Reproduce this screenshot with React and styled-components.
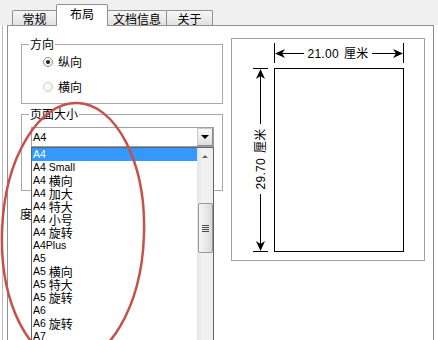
import React from "react";
import styled, { createGlobalStyle } from "styled-components";

const CJK = `"Noto Sans CJK SC", sans-serif`;
const UI = `"Liberation Sans", "Noto Sans CJK SC", sans-serif`;

const GlobalStyle = createGlobalStyle`
  html, body { margin: 0; padding: 0; background: #fff; }
  body { width: 438px; height: 340px; overflow: hidden; font: 12px ${UI}; color: #000; }
  * { box-sizing: border-box; }
`;

const Dialog = styled.div`
  position: relative;
  width: 438px;
  height: 340px;
  overflow: hidden;
  display: flex;
  flex-direction: column;
  background: linear-gradient(to right, transparent 2px, #bcbcbc 2px, #bcbcbc 3px, transparent 3px) #fff;
`;

const TabStrip = styled.div`
  position: relative;
  z-index: 1;
  height: 25px;
  flex: none;
  display: flex;
  align-items: flex-end;
  padding-left: 12px;
  background: #f0f0f0;
`;

const Tab = styled.div`
  position: relative;
  z-index: ${(p) => (p.$active ? 2 : 1)};
  width: ${(p) => p.$w}px;
  height: ${(p) => (p.$active ? 22 : 15)}px;
  margin-left: ${(p) => (p.$first ? 0 : -1)}px;
  margin-bottom: ${(p) => (p.$active ? -1 : 0)}px;
  padding-top: ${(p) => (p.$active ? 2 : 1)}px;
  display: flex;
  justify-content: center;
  align-items: flex-start;
  border: 1px solid #8e9094;
  border-bottom: none;
  border-radius: 2px 2px 0 0;
  background: ${(p) => (p.$active ? "#fff" : "linear-gradient(#f7f7f7, #e1e1e1)")};
  font: 12px/14px ${CJK};
  white-space: nowrap;
`;

const Panel = styled.div`
  flex: 1;
  margin: 0 4px 0 7px;
  border: 1px solid #8e9094;
  border-bottom: none;
  background: #fff;
  display: grid;
  grid-template-columns: 202px 194px;
  column-gap: 8px;
  align-items: start;
  padding: 11px 0 0 13px;
`;

const LeftCol = styled.div`
  display: flex;
  flex-direction: column;
`;

const GroupBox = styled.fieldset`
  margin: ${(p) => p.$mt || 0}px 0 0 0;
  padding: 0 8px ${(p) => p.$pb}px 7px;
  min-width: 0;
  border: 1px solid #a9a9a9;
  box-shadow: inset 1px 1px 0 #fff;
`;

const Legend = styled.legend`
  padding: 0 1px;
  font: 12px/14px ${CJK};
`;

const Options = styled.div`
  display: flex;
  flex-direction: column;
  gap: 11px;
  padding: 4px 0 9px 14px;
`;

const Option = styled.label`
  display: flex;
  align-items: center;
  gap: 5px;
  height: 14px;
  font: 12px/14px ${CJK};
`;

const RadioMark = styled.span`
  width: 10px;
  height: 10px;
  flex: none;
  border-radius: 50%;
  border: 1px solid ${(p) => (p.$checked ? "#8f8f8f" : "#cdcdcd")};
  background: radial-gradient(circle at 35% 35%, #fff, #ececec);
  display: flex;
  align-items: center;
  justify-content: center;
  &::after {
    content: "";
    width: 4px;
    height: 4px;
    border-radius: 50%;
    background: ${(p) => (p.$checked ? "#1c1c1c" : "transparent")};
  }
`;

const ComboBox = styled.div`
  position: relative;
  margin: 6px 0 0 2px;
  width: 183px;
  height: 20px;
  display: flex;
  border: 1px solid #9da0a6;
  background: #fff;
`;

const ComboValue = styled.div`
  flex: 1;
  padding-left: 1px;
  font: 11px/18px ${UI};
`;

const ComboButton = styled.div`
  width: 16px;
  height: 18px;
  display: flex;
  align-items: center;
  justify-content: center;
  border: 1px solid #9a9a9a;
  border-color: #c9c9c9 #8a8a8a #8a8a8a #c9c9c9;
  background: linear-gradient(#fafafa, #dedede);
`;

const DownTriangle = styled.span`
  width: 0;
  height: 0;
  border-left: 4px solid transparent;
  border-right: 4px solid transparent;
  border-top: 4px solid #000;
`;

const DropList = styled.div`
  position: absolute;
  z-index: 5;
  top: 19px;
  left: -1px;
  width: 183px;
  height: 200px;
  display: flex;
  border: 1px solid #646464;
  background: #fff;
`;

const Items = styled.div`
  flex: 1;
  display: flex;
  flex-direction: column;
`;

const Item = styled.div`
  height: 13px;
  display: flex;
  align-items: center;
  padding-left: 1px;
  white-space: pre;
  background: ${(p) => (p.$selected ? "#3399ff" : "transparent")};
  color: ${(p) => (p.$selected ? "#fff" : "#000")};
`;

const Latin = styled.span`
  font: 10.5px/13px "Liberation Sans", sans-serif;
`;

const Cjk = styled.span`
  font: 12px/13px ${CJK};
`;

const ScrollBar = styled.div`
  width: 16px;
  display: flex;
  flex-direction: column;
  background: linear-gradient(to right, #e4e4e4, #f3f3f3 40%, #eeeeee);
`;

const ScrollUp = styled.div`
  height: 17px;
  display: flex;
  align-items: center;
  justify-content: center;
`;

const UpTriangle = styled.span`
  width: 0;
  height: 0;
  border-left: 3px solid transparent;
  border-right: 3px solid transparent;
  border-bottom: 3px solid #606060;
`;

const Thumb = styled.div`
  margin: 38px 0 0 1px;
  width: 15px;
  height: 50px;
  display: flex;
  align-items: center;
  justify-content: center;
  border: 1px solid #979797;
  border-radius: 2px;
  background: linear-gradient(to right, #f6f6f6, #e6e6e6 60%, #d8d8d8);
`;

const Grip = styled.span`
  width: 7px;
  height: 7px;
  background: repeating-linear-gradient(to bottom, #4a4a4a 0 1px, transparent 1px 2px);
`;

const FieldLabel = styled.div`
  margin: 16px 0 0 -1px;
  font: 12px/14px ${CJK};
`;

const Preview = styled.div`
  margin-top: 1px;
  height: 223px;
  border: 1px solid #a0a0a0;
  box-shadow: 1px 1px 0 #fff;
  background: #fff;
`;

const PreviewSvg = styled.svg`
  display: block;
  font-family: ${UI};
`;

const Annotation = styled.svg`
  position: absolute;
  inset: 0;
  z-index: 10;
  pointer-events: none;
`;

const TABS = [
  { label: "常规", w: 45 },
  { label: "布局", w: 52, active: true },
  { label: "文档信息", w: 60 },
  { label: "关于", w: 47 },
];

const SIZES = [
  ["A4"],
  ["A4 Small"],
  ["A4", "横向"],
  ["A4", "加大"],
  ["A4", "特大"],
  ["A4", "小号"],
  ["A4", "旋转"],
  ["A4Plus"],
  ["A5"],
  ["A5", "横向"],
  ["A5", "特大"],
  ["A5", "旋转"],
  ["A6"],
  ["A6", "旋转"],
  ["A7"],
];

export default function App() {
  return (
    <>
      <GlobalStyle />
      <Dialog>
        <TabStrip>
          {TABS.map((t, i) => (
            <Tab key={t.label} $w={t.w} $active={t.active} $first={i === 0}>
              {t.label}
            </Tab>
          ))}
        </TabStrip>
        <Panel>
          <LeftCol>
            <GroupBox $pb={0}>
              <Legend>方向</Legend>
              <Options>
                <Option>
                  <RadioMark $checked />
                  纵向
                </Option>
                <Option>
                  <RadioMark />
                  横向
                </Option>
              </Options>
            </GroupBox>
            <GroupBox $mt={3} $pb={43}>
              <Legend>页面大小</Legend>
              <ComboBox>
                <ComboValue>A4</ComboValue>
                <ComboButton>
                  <DownTriangle />
                </ComboButton>
                <DropList>
                  <Items>
                    {SIZES.map(([code, name], i) => (
                      <Item key={i} $selected={i === 0}>
                        <Latin>{code}</Latin>
                        {name && (
                          <>
                            <Latin> </Latin>
                            <Cjk>{name}</Cjk>
                          </>
                        )}
                      </Item>
                    ))}
                  </Items>
                  <ScrollBar>
                    <ScrollUp>
                      <UpTriangle />
                    </ScrollUp>
                    <Thumb>
                      <Grip />
                    </Thumb>
                  </ScrollBar>
                </DropList>
              </ComboBox>
            </GroupBox>
            <FieldLabel>度量单位(M):</FieldLabel>
          </LeftCol>
          <Preview>
            <PreviewSvg width="192" height="221" viewBox="0 0 192 221">
              <g stroke="#000" strokeWidth="1" fill="none">
                <rect x="42.5" y="29.5" width="129" height="183" fill="#fff" />
                <line x1="42.5" y1="4" x2="42.5" y2="24" />
                <line x1="171.5" y1="4" x2="171.5" y2="24" />
                <line x1="44" y1="14.5" x2="72" y2="14.5" />
                <line x1="140" y1="14.5" x2="170" y2="14.5" />
                <line x1="21" y1="29.5" x2="36" y2="29.5" />
                <line x1="21" y1="212.5" x2="36" y2="212.5" />
                <line x1="28.5" y1="31" x2="28.5" y2="85" />
                <line x1="28.5" y1="155" x2="28.5" y2="211" />
              </g>
              <g fill="#000">
                <polygon points="43,14.5 53,10 50,14.5 53,19" />
                <polygon points="171,14.5 161,10 164,14.5 161,19" />
                <polygon points="28.5,30 24,40 28.5,37 33,40" />
                <polygon points="28.5,212 24,202 28.5,205 33,202" />
                <text x="106" y="18.5" textAnchor="middle" fontSize="12" letterSpacing="0.3">
                  <tspan>21.00</tspan>
                  <tspan dx="5">厘米</tspan>
                </text>
                <text
                  transform="translate(33 120) rotate(-90)"
                  textAnchor="middle"
                  fontSize="12"
                  letterSpacing="0.3"
                >
                  <tspan>29.70</tspan>
                  <tspan dx="5">厘米</tspan>
                </text>
              </g>
            </PreviewSvg>
          </Preview>
        </Panel>
        <Annotation width="438" height="340" viewBox="0 0 438 340">
          <ellipse
            cx="73"
            cy="233"
            rx="71"
            ry="130"
            transform="rotate(2 73 233)"
            fill="none"
            stroke="#c4524a"
            strokeWidth="2.5"
          />
        </Annotation>
      </Dialog>
    </>
  );
}
